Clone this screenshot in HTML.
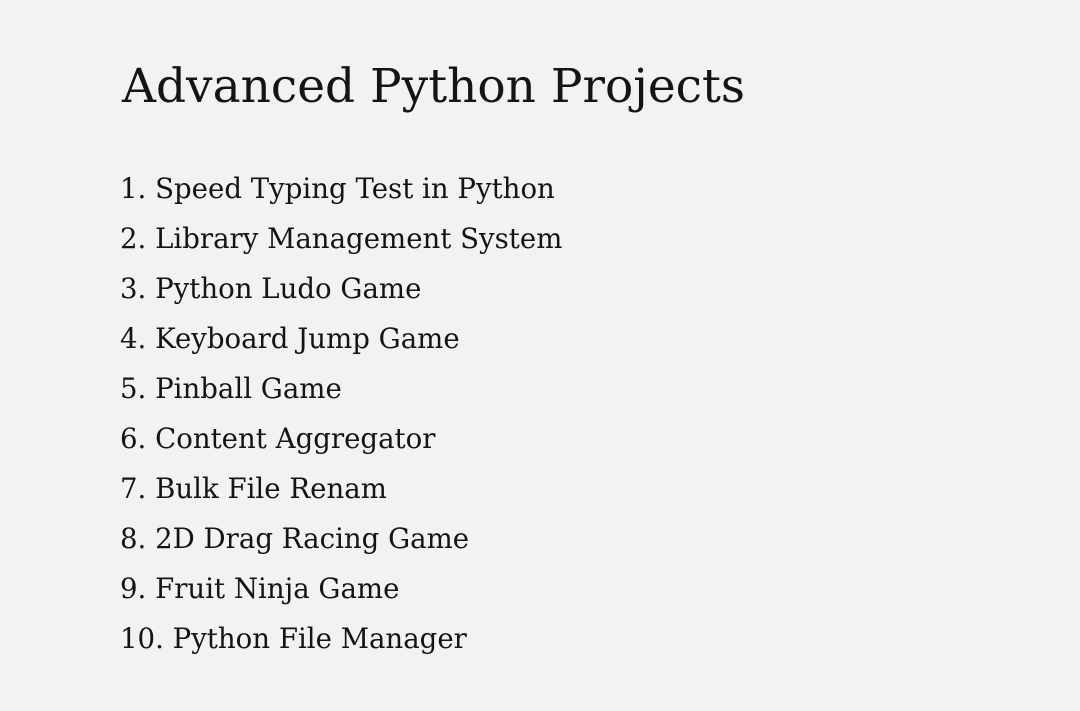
<!DOCTYPE html>
<html><head><meta charset="utf-8"><style>
html,body{margin:0;padding:0;width:1080px;height:711px;background:#f2f2f2;overflow:hidden}
body{font-family:"DejaVu Serif","Liberation Serif",serif;color:#141414;position:relative}
h1{position:absolute;left:122px;top:57px;margin:0;font-weight:normal;font-size:47px;line-height:60px;letter-spacing:0}
.l{position:absolute;left:120px;font-size:27.6px;line-height:36px;letter-spacing:0;white-space:nowrap}
</style></head><body>
<h1>Advanced Python Projects</h1>
<div class="l" style="top:171px">1. Speed Typing Test in Python</div>
<div class="l" style="top:221px">2. Library Management System</div>
<div class="l" style="top:271px">3. Python Ludo Game</div>
<div class="l" style="top:321px">4. Keyboard Jump Game</div>
<div class="l" style="top:371px">5. Pinball Game</div>
<div class="l" style="top:421px">6. Content Aggregator</div>
<div class="l" style="top:471px">7. Bulk File Renam</div>
<div class="l" style="top:521px">8. 2D Drag Racing Game</div>
<div class="l" style="top:571px">9. Fruit Ninja Game</div>
<div class="l" style="top:621px">10. Python File Manager</div>
</body></html>
